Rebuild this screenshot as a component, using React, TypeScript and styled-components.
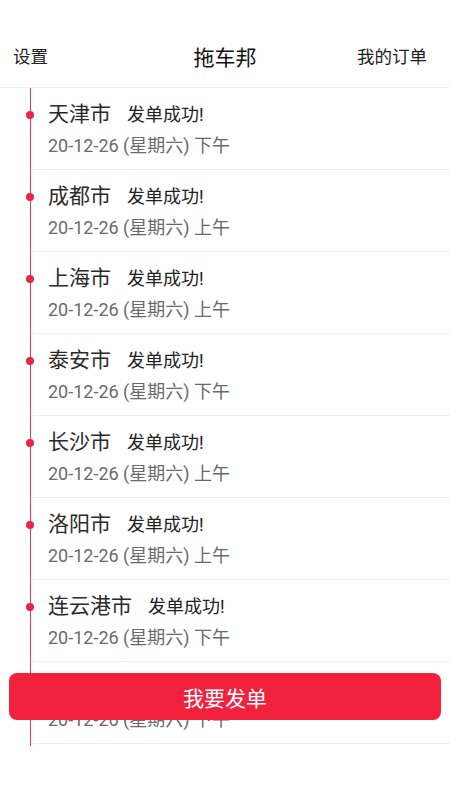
import React from "react";
import styled, { createGlobalStyle } from "styled-components";

const Global = createGlobalStyle`
  html, body { margin: 0; padding: 0; background: #ffffff; }
  body { font-family: Roboto, "Noto Sans CJK SC", sans-serif; }
`;

const Page = styled.div`
  width: 450px;
  height: 800px;
  position: relative;
  overflow: hidden;
  background: #ffffff;
`;

const Header = styled.header`
  margin-top: 24px;
  height: 63px;
  display: flex;
  align-items: center;
  justify-content: space-between;
  padding: 0 23px 0 13px;
  border-bottom: 1px solid #f0f0f0;
  position: relative;
`;

const SideLink = styled.span`
  font-size: 17.5px;
  color: #222;
`;

const Title = styled.span`
  position: absolute;
  left: 0;
  right: 0;
  text-align: center;
  font-size: 21px;
  color: #111;
  pointer-events: none;
`;

const Timeline = styled.div`
  margin-left: 30px;
  border-left: 1.5px solid #e23a55;
  height: 658px;
`;

const Item = styled.div`
  position: relative;
  height: 81px;
  border-bottom: 1px solid #efeff1;
  padding-left: 17px;
  display: flex;
  flex-direction: column;
`;

const Dot = styled.span`
  position: absolute;
  left: -5px;
  top: 23px;
  width: 8px;
  height: 8px;
  border-radius: 50%;
  background: #e8244a;
`;

const TopRow = styled.div`
  display: flex;
  align-items: baseline;
  gap: 16px;
  margin-top: 9px;
  height: 28px;
`;

const City = styled.span`
  font-size: 21px;
  color: #2a2a2a;
`;

const Status = styled.span`
  font-size: 18px;
  color: #222;
`;

const DateText = styled.span`
  margin-top: 6px;
  font-size: 18px;
  color: #6a6a6a;
`;

const SubmitButton = styled.button`
  position: absolute;
  left: 9px;
  right: 9px;
  top: 673px;
  height: 47px;
  border: none;
  border-radius: 8px;
  background: #f2223f;
  color: #ffffff;
  font-family: Roboto, "Noto Sans CJK SC", sans-serif;
  font-size: 21px;
  display: flex;
  align-items: center;
  justify-content: center;
`;

const items = [
  { city: "天津市", time: "下午" },
  { city: "成都市", time: "上午" },
  { city: "上海市", time: "上午" },
  { city: "泰安市", time: "下午" },
  { city: "长沙市", time: "上午" },
  { city: "洛阳市", time: "上午" },
  { city: "连云港市", time: "下午" },
  { city: "北京市", time: "下午" },
];

export default function App() {
  return (
    <Page>
      <Global />
      <Header>
        <SideLink>设置</SideLink>
        <Title>拖车邦</Title>
        <SideLink>我的订单</SideLink>
      </Header>
      <Timeline>
        {items.map((it, i) => (
          <Item key={i}>
            <Dot />
            <TopRow>
              <City>{it.city}</City>
              <Status>发单成功!</Status>
            </TopRow>
            <DateText>20-12-26 (星期六) {it.time}</DateText>
          </Item>
        ))}
      </Timeline>
      <SubmitButton>我要发单</SubmitButton>
    </Page>
  );
}
